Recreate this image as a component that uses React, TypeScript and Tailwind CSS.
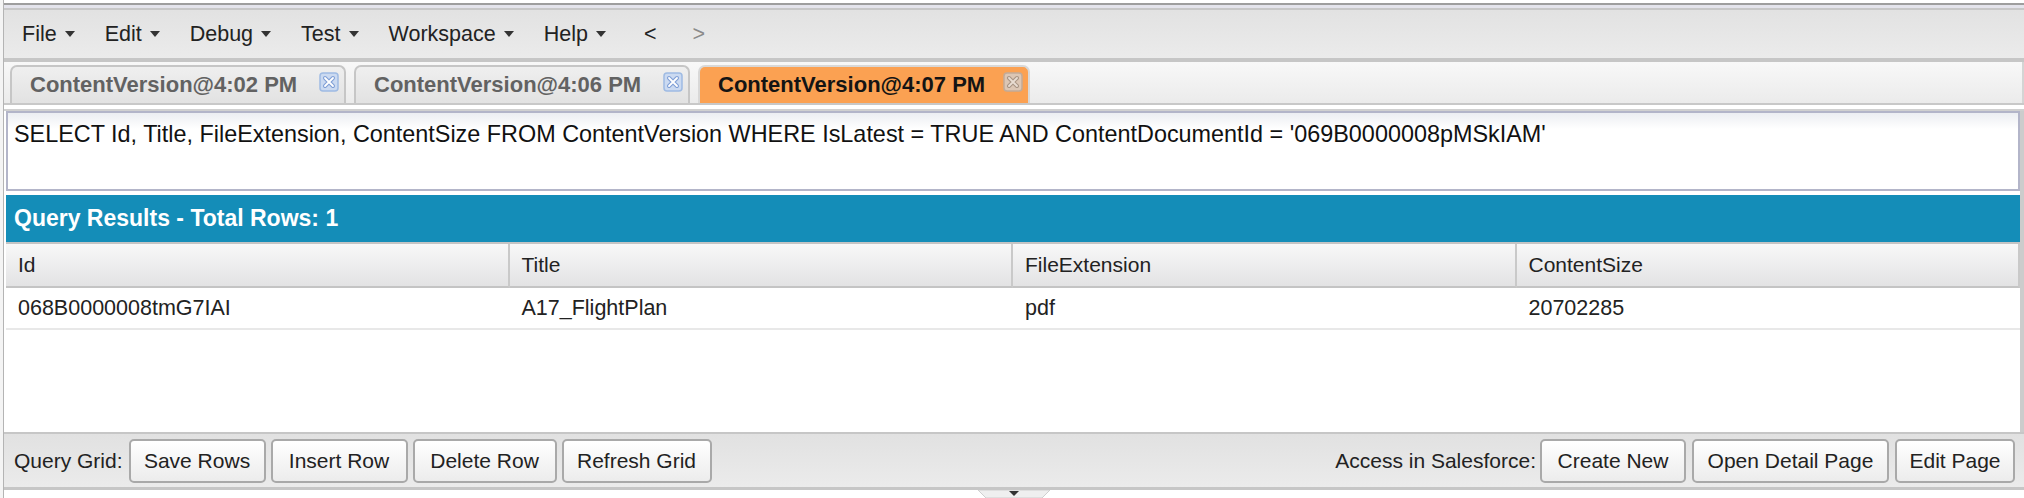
import React from 'react';

const FONT = "font-['Liberation_Sans','Noto_Sans',sans-serif]";

const MENU = ['File', 'Edit', 'Debug', 'Test', 'Workspace', 'Help'];

const TABS = [
  { label: 'ContentVersion@4:02 PM', width: 'w-[336px]', active: false },
  { label: 'ContentVersion@4:06 PM', width: 'w-[336px]', active: false },
  { label: 'ContentVersion@4:07 PM', width: 'w-[332px]', active: true },
];

const COLUMNS = ['Id', 'Title', 'FileExtension', 'ContentSize'];
const ROW = ['068B0000008tmG7IAI', 'A17_FlightPlan', 'pdf', '20702285'];

const QUERY =
  "SELECT Id, Title, FileExtension, ContentSize FROM ContentVersion WHERE IsLatest = TRUE AND ContentDocumentId = '069B0000008pMSkIAM'";

function Caret() {
  return (
    <svg width="10" height="6" viewBox="0 0 10 6" className="ml-[8px]">
      <path d="M0 0h10L5 6z" fill="#333" />
    </svg>
  );
}

function CloseIcon({ active }: { active: boolean }) {
  const fill = active ? '#dcc6b4' : '#cbdaf1';
  const edge = active ? '#c2ab98' : '#9fbbe3';
  const outer = active ? '#a89484' : '#7f9fd6';
  const inner = active ? '#e9ddd2' : '#ffffff';
  return (
    <svg width="20" height="20" viewBox="0 0 20 20" className="shrink-0 -mt-[6px]">
      <rect x="1" y="1" width="18" height="18" rx="3" fill={fill} stroke={edge} strokeWidth="1.5" />
      <path d="M6 6l8 8M14 6l-8 8" stroke={outer} strokeWidth="4" strokeLinecap="round" />
      <path d="M6 6l8 8M14 6l-8 8" stroke={inner} strokeWidth="1.8" strokeLinecap="round" />
    </svg>
  );
}

function Tab({ label, width, active }: { label: string; width: string; active: boolean }) {
  return (
    <div
      className={`${width} h-[38px] flex items-center justify-between pl-[18px] pr-[5px] rounded-t-[7px] border-2 border-b-0 ${
        active
          ? 'bg-[#fba152] border-[#d8d8d8] text-[#141414]'
          : 'bg-[linear-gradient(to_bottom,#efefef,#e2e2e2)] border-[#c6c6c6] text-[#626262]'
      }`}
    >
      <span className="text-[22px] font-bold leading-none">{label}</span>
      <CloseIcon active={active} />
    </div>
  );
}

function Button({ label, width }: { label: string; width: string }) {
  return (
    <button
      className={`${width} h-[44px] rounded-[5px] border-2 border-[#a9a9a9] bg-[linear-gradient(to_bottom,#ffffff,#ececec)] text-[21px] text-[#222] leading-none`}
    >
      {label}
    </button>
  );
}

export default function App() {
  return (
    <div className={`${FONT} w-[2024px] h-[498px] overflow-hidden bg-white flex text-[#222]`}>
      {/* sliver of the window behind */}
      <div className="w-[4px] shrink-0 border-r border-[#b4b4b4] bg-[#f4f4f4]" />

      <div className="flex-1 flex flex-col">
        {/* top edge */}
        <div className="h-[3px] bg-white" />
        <div className="h-[2px] bg-[#9e9e9e]" />
        <div className="h-[3px] bg-[#e4e4ec]" />
        <div className="h-[2px] bg-[#c8c8c8]" />

        {/* menu bar */}
        <div className="h-[48px] flex items-center pl-[18px] gap-[30px] bg-[linear-gradient(to_bottom,#e2e2e2,#ebebeb)] text-[21.5px]">
          {MENU.map(m => (
            <div key={m} className="flex items-center">
              <span>{m}</span>
              <Caret />
            </div>
          ))}
          <span className="text-[#222] ml-[8px]">&lt;</span>
          <span className="text-[#8a8a8a] ml-[6px]">&gt;</span>
        </div>
        <div className="h-[4px] bg-[#c6c6c6]" />

        {/* tab strip */}
        <div className="h-[41px] flex items-end gap-[8px] pl-[6px] bg-[linear-gradient(to_bottom,#f8f8f8,#ebebeb)] border-r-2 border-[#d4d4d4]">
          {TABS.map(t => (
            <Tab key={t.label} {...t} />
          ))}
        </div>
        <div className="h-[2px] bg-[#c8c8c8]" />
        <div className="h-[4px] bg-white" />
        <div className="h-[2px] bg-[#d0d0d0]" />

        {/* body */}
        <div className="flex-1 flex flex-col pl-[2px] border-r-4 border-[#cccccc]">
          <div className="h-[80px] border-2 border-[#b3b5c9] bg-[linear-gradient(to_bottom,#eceef2,#ffffff_16px)] px-[6px] pt-[4px] text-[23.4px] text-[#111] whitespace-nowrap">
            {QUERY}
          </div>
          <div className="h-[4px] bg-white" />

          <div className="h-[47px] bg-[#148db8] flex items-center pl-[8px] text-[23px] font-bold text-white">
            Query Results - Total Rows: 1
          </div>
          <div className="h-[2px] bg-[#c4c4c4]" />

          {/* result grid */}
          <div className="grid grid-cols-4">
            {COLUMNS.map(c => (
              <div
                key={c}
                className="h-[44px] flex items-center pl-[12px] border-r-2 border-b-2 border-r-[#c9c9c9] border-b-[#c4c4c4] bg-[linear-gradient(to_bottom,#f8f8f8,#e3e3e4)] text-[21px]"
              >
                {c}
              </div>
            ))}
            {ROW.map((v, i) => (
              <div key={i} className="h-[42px] flex items-center pl-[12px] border-b-2 border-[#e8e8e8] text-[21.5px]">
                {v}
              </div>
            ))}
          </div>

          <div className="flex-1" />
        </div>

        {/* bottom toolbar */}
        <div className="h-[58px] flex items-center border-t-2 border-b-[3px] border-[#c6c6c6] bg-[linear-gradient(to_bottom,#e1e1e1,#ebebeb)] pl-[10px] pr-[9px] text-[21px]">
          <span className="mr-[6px]">Query Grid:</span>
          <div className="flex gap-[5px]">
            <Button label="Save Rows" width="w-[137px]" />
            <Button label="Insert Row" width="w-[137px]" />
            <Button label="Delete Row" width="w-[144px]" />
            <Button label="Refresh Grid" width="w-[150px]" />
          </div>
          <span className="ml-auto mr-[4px]">Access in Salesforce:</span>
          <div className="flex gap-[6px]">
            <Button label="Create New" width="w-[146px]" />
            <Button label="Open Detail Page" width="w-[197px]" />
            <Button label="Edit Page" width="w-[120px]" />
          </div>
        </div>

        {/* splitter handle */}
        <div className="h-[8px] flex justify-center">
          <svg width="72" height="8" viewBox="0 0 72 8">
            <path d="M0 0h72l-8 8H8z" fill="#efefef" stroke="#cfcfcf" strokeWidth="1" />
            <path d="M31 1h10l-5 5z" fill="#333" />
          </svg>
        </div>
      </div>
    </div>
  );
}
